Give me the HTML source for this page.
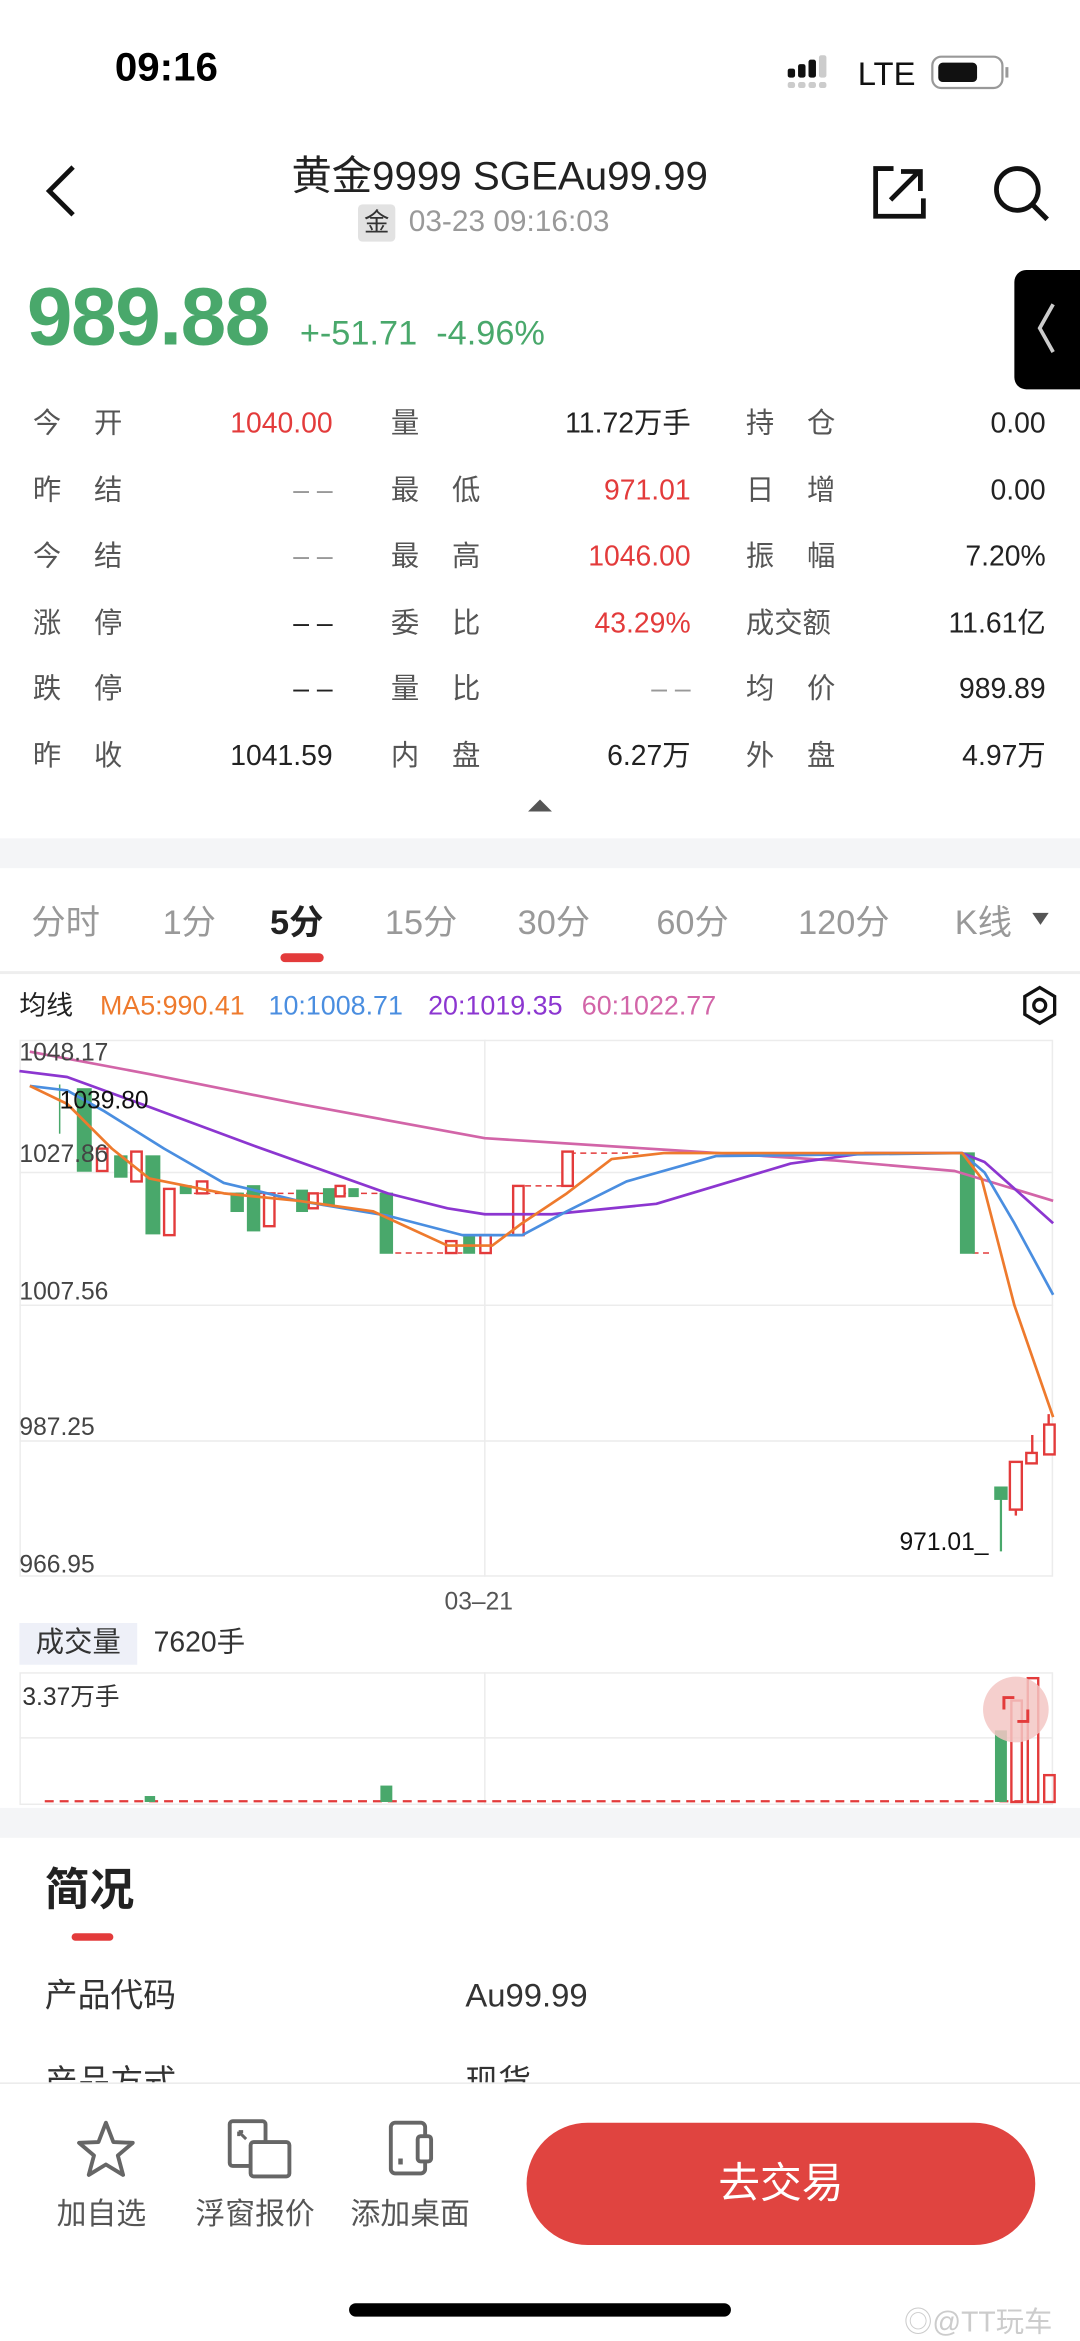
<!DOCTYPE html>
<html><head><meta charset="utf-8"><style>
html,body{margin:0;padding:0;background:#fff;}
body{width:1080px;height:2338px;overflow:hidden;position:relative;}
#w{position:absolute;left:0;top:0;width:724px;height:1568px;transform:scale(1.49171);transform-origin:0 0;font-family:"Liberation Sans","Noto Sans CJK SC",sans-serif;color:#222;}
.a{position:absolute;white-space:nowrap;}
.lb{color:#555;font-size:19px;line-height:24px;}
.v{font-size:19px;color:#222;text-align:right;line-height:24px;}
.r{color:#e33b3b;}
.g{color:#49a86b;}
.tab{position:absolute;top:603px;font-size:23px;color:#999;line-height:30px;}
</style></head><body><div id="w">
<!-- status -->
<div class="a" style="left:77px;top:30px;font-size:27px;font-weight:bold;color:#000;">09:16</div>
<svg class="a" style="left:528px;top:36px" width="150" height="26">
<rect x="0" y="10" width="5" height="6" rx="1.5" fill="#111"/><rect x="7" y="7" width="5" height="9" rx="1.5" fill="#111"/><rect x="14" y="4" width="5" height="12" rx="1.5" fill="#111"/><rect x="21" y="1" width="5" height="15" rx="1.5" fill="#ccc"/>
<rect x="0" y="19" width="5" height="4" rx="1.5" fill="#ccc"/><rect x="7" y="19" width="5" height="4" rx="1.5" fill="#ccc"/><rect x="14" y="19" width="5" height="4" rx="1.5" fill="#ccc"/><rect x="21" y="19" width="5" height="4" rx="1.5" fill="#ccc"/>
<text x="47" y="21" font-size="22" font-family="Liberation Sans" fill="#111">LTE</text>
<rect x="97" y="2" width="47" height="21" rx="6" fill="none" stroke="#999" stroke-width="1.5"/><rect x="101" y="6" width="26" height="13" rx="3" fill="#111"/><rect x="146" y="9" width="2" height="7" fill="#999"/>
</svg>
<!-- header -->
<svg class="a" style="left:28px;top:108px" width="26" height="40"><path d="M21 4 L5 20 L21 36" fill="none" stroke="#111" stroke-width="3.2"/></svg>
<div class="a" style="left:0;width:670px;text-align:center;top:96px;font-size:27px;color:#222;">黄金9999 SGEAu99.99</div>
<div class="a" style="left:240px;top:137px;width:25px;height:25px;background:#e2e2e2;border-radius:3px;font-size:17px;text-align:center;line-height:25px;color:#333;">金</div>
<div class="a" style="left:274px;top:137px;font-size:20px;color:#999;line-height:25px">03-23 09:16:03</div>
<svg class="a" style="left:584px;top:110px" width="38" height="38"><path d="M15 3 H3 V35 H35 V23" fill="none" stroke="#111" stroke-width="3.2"/><path d="M13 24 L31 6 M20 5 H33 V18" fill="none" stroke="#111" stroke-width="3.2"/></svg>
<svg class="a" style="left:664px;top:108px" width="42" height="42"><circle cx="18" cy="19" r="14" fill="none" stroke="#111" stroke-width="3.2"/><path d="M28 29 L38 39" stroke="#111" stroke-width="3.4"/></svg>
<div class="a" style="left:680px;top:181px;width:50px;height:80px;background:#000;border-radius:8px 0 0 8px;"></div>
<svg class="a" style="left:692px;top:200px" width="20" height="40"><path d="M14 4 L5 20 L14 36" fill="none" stroke="#ccc" stroke-width="2.5"/></svg>
<!-- price -->
<div class="a g" style="left:18px;top:180px;font-size:55px;font-weight:bold;letter-spacing:-1px;">989.88</div>
<div class="a g" style="left:201px;top:210px;font-size:23px;">+-51.71 &nbsp;-4.96%</div>
<!-- table -->
<div class="a lb" style="left:22px;top:273px;letter-spacing:22px">今开</div>
<div class="a lb" style="left:22px;top:318px;letter-spacing:22px">昨结</div>
<div class="a lb" style="left:22px;top:362px;letter-spacing:22px">今结</div>
<div class="a lb" style="left:22px;top:407px;letter-spacing:22px">涨停</div>
<div class="a lb" style="left:22px;top:451px;letter-spacing:22px">跌停</div>
<div class="a lb" style="left:22px;top:496px;letter-spacing:22px">昨收</div>
<div class="a v r" style="right:501px;top:273px">1040.00</div>
<div class="a v" style="right:501px;top:318px;color:#999">– –</div>
<div class="a v" style="right:501px;top:362px;color:#999">– –</div>
<div class="a v" style="right:501px;top:407px">– –</div>
<div class="a v" style="right:501px;top:451px">– –</div>
<div class="a v" style="right:501px;top:496px">1041.59</div>
<div class="a lb" style="left:262px;top:273px">量</div>
<div class="a lb" style="left:262px;top:318px;letter-spacing:22px">最低</div>
<div class="a lb" style="left:262px;top:362px;letter-spacing:22px">最高</div>
<div class="a lb" style="left:262px;top:407px;letter-spacing:22px">委比</div>
<div class="a lb" style="left:262px;top:451px;letter-spacing:22px">量比</div>
<div class="a lb" style="left:262px;top:496px;letter-spacing:22px">内盘</div>
<div class="a v" style="right:261px;top:273px">11.72万手</div>
<div class="a v r" style="right:261px;top:318px">971.01</div>
<div class="a v r" style="right:261px;top:362px">1046.00</div>
<div class="a v r" style="right:261px;top:407px">43.29%</div>
<div class="a v" style="right:261px;top:451px;color:#999">– –</div>
<div class="a v" style="right:261px;top:496px">6.27万</div>
<div class="a lb" style="left:500px;top:273px;letter-spacing:22px">持仓</div>
<div class="a lb" style="left:500px;top:318px;letter-spacing:22px">日增</div>
<div class="a lb" style="left:500px;top:362px;letter-spacing:22px">振幅</div>
<div class="a lb" style="left:500px;top:407px">成交额</div>
<div class="a lb" style="left:500px;top:451px;letter-spacing:22px">均价</div>
<div class="a lb" style="left:500px;top:496px;letter-spacing:22px">外盘</div>
<div class="a v" style="right:23px;top:273px">0.00</div>
<div class="a v" style="right:23px;top:318px">0.00</div>
<div class="a v" style="right:23px;top:362px">7.20%</div>
<div class="a v" style="right:23px;top:407px">11.61亿</div>
<div class="a v" style="right:23px;top:451px">989.89</div>
<div class="a v" style="right:23px;top:496px">4.97万</div>
<svg class="a" style="left:353px;top:535px" width="18" height="10"><path d="M1 9 L9 1 L17 9Z" fill="#555"/></svg>
<div class="a" style="left:0;top:562px;width:724px;height:20px;background:#f4f5f7;"></div>
<!-- tabs -->
<div class="tab" style="left:21px">分时</div>
<div class="tab" style="left:109px">1分</div>
<div class="tab" style="left:181px;color:#222;font-weight:bold">5分</div>
<div class="tab" style="left:258px">15分</div>
<div class="tab" style="left:347px">30分</div>
<div class="tab" style="left:440px">60分</div>
<div class="tab" style="left:535px">120分</div>
<div class="tab" style="left:640px">K线</div>
<svg class="a" style="left:692px;top:611px" width="12" height="10"><path d="M0 1 H11 L5.5 9Z" fill="#555"/></svg>
<div class="a" style="left:188px;top:639px;width:29px;height:6px;border-radius:3px;background:#e33b3b;"></div>
<div class="a" style="left:0;top:651px;width:724px;height:2px;background:#eee;"></div>
<!-- legend -->
<div class="a" style="left:13px;top:662px;font-size:18px;color:#222;line-height:24px">均线</div>
<div class="a" style="left:67px;top:662px;font-size:18px;color:#ee7a2d;line-height:24px">MA5:990.41</div>
<div class="a" style="left:180px;top:662px;font-size:18px;color:#4a8ee0;line-height:24px">10:1008.71</div>
<div class="a" style="left:287px;top:662px;font-size:18px;color:#8c36d0;line-height:24px">20:1019.35</div>
<div class="a" style="left:390px;top:662px;font-size:18px;color:#d265a8;line-height:24px">60:1022.77</div>
<svg class="a" style="left:684px;top:660px" width="26" height="28"><path d="M13 2 L23 8 V20 L13 26 L3 20 V8Z" fill="none" stroke="#111" stroke-width="2.2"/><circle cx="13" cy="14" r="4" fill="none" stroke="#111" stroke-width="2.2"/></svg>
<!-- chart -->
<svg class="a" style="left:0;top:0" width="724" height="1240">
<g stroke="#ececec" stroke-width="1" fill="none">
<rect x="13.5" y="697.5" width="692" height="359"/>
<line x1="13" y1="786" x2="706" y2="786"/><line x1="13" y1="875" x2="706" y2="875"/><line x1="13" y1="966" x2="706" y2="966"/>
<line x1="325" y1="697" x2="325" y2="1057"/>
<rect x="13.5" y="1121.5" width="692" height="88"/><line x1="13" y1="1165" x2="706" y2="1165"/><line x1="325" y1="1121" x2="325" y2="1210"/>
</g>
<g stroke="#e33b3b" stroke-dasharray="4 3" stroke-width="1">
<line x1="130" y1="800" x2="262" y2="800"/><line x1="265" y1="840" x2="310" y2="840"/><line x1="345" y1="795" x2="378" y2="795"/><line x1="382" y1="773" x2="430" y2="773"/><line x1="652" y1="840" x2="664" y2="840"/>
</g>
<g fill="#49a86b" stroke="#49a86b">
<rect x="52" y="730" width="9" height="55"/><rect x="77" y="775" width="8" height="14"/><rect x="98" y="775" width="9" height="52"/><rect x="121" y="795" width="7" height="5"/><rect x="155" y="800" width="8" height="12"/><rect x="166" y="795" width="8" height="30"/><rect x="199" y="798" width="7" height="14"/><rect x="217" y="797" width="7" height="11"/><rect x="234" y="797" width="6" height="5"/><rect x="255" y="800" width="8" height="40"/><rect x="311" y="829" width="7" height="11"/><rect x="644" y="773" width="9" height="67"/><rect x="667" y="997" width="8" height="8"/>
<line x1="671" y1="1005" x2="671" y2="1040" stroke-width="1.5"/><line x1="40" y1="727" x2="40" y2="760" stroke-width="1"/>
</g>
<g fill="#fff" stroke="#e33b3b" stroke-width="1.6">
<rect x="65" y="770" width="7" height="15"/><rect x="88" y="772" width="7" height="20"/><rect x="110" y="797" width="7" height="31"/><rect x="132" y="792" width="7" height="8"/><rect x="177" y="800" width="7" height="22"/><rect x="207" y="800" width="6" height="10"/><rect x="225" y="795" width="6" height="7"/><rect x="299" y="832" width="7" height="8"/><rect x="322" y="828" width="7" height="12"/><rect x="344" y="795" width="7" height="33"/><rect x="377" y="772" width="7" height="23"/><rect x="677" y="980" width="8" height="32"/><rect x="688" y="974" width="7" height="7"/><rect x="700" y="955" width="7" height="20"/>
<line x1="681" y1="1012" x2="681" y2="1016"/><line x1="692" y1="962" x2="692" y2="974"/><line x1="703" y1="948" x2="703" y2="955"/>
</g>
<g fill="none" stroke-width="1.8" stroke-linejoin="round">
<polyline stroke="#d265a8" points="20,705 100,720 200,740 325,763 450,771 560,778 640,785 706,805"/>
<polyline stroke="#8c36d0" points="13,718 45,722 100,742 170,768 260,800 300,810 325,814 370,814 440,807 530,780 580,773 645,773 660,779 706,820"/>
<polyline stroke="#4a8ee0" points="20,728 45,731 70,745 110,770 150,793 200,805 260,815 310,828 350,828 380,812 420,792 480,775 645,773 660,786 680,820 706,868"/>
<polyline stroke="#ee7a2d" points="20,728 45,740 75,770 100,790 150,800 200,805 250,812 300,835 330,835 350,820 380,800 410,777 445,773 645,773 658,790 680,875 706,950"/>
</g>
<g font-family="Liberation Sans" font-size="16.5" fill="#444">
<text x="13" y="711">1048.17</text><text x="13" y="779">1027.86</text><text x="13" y="871">1007.56</text><text x="13" y="962">987.25</text><text x="13" y="1054">966.95</text>
<text x="40" y="743" fill="#111">1039.80</text><text x="603" y="1039" fill="#111">971.01_</text>
<text x="298" y="1079" fill="#555">03–21</text>
<text x="15" y="1143" fill="#333" font-family="Liberation Sans, Noto Sans CJK SC">3.37万手</text>
</g>
<line x1="30" y1="1207.5" x2="690" y2="1207.5" stroke="#e33b3b" stroke-dasharray="6 4" stroke-width="1.5"/>
<rect x="255" y="1197" width="8" height="11" fill="#49a86b"/><rect x="97" y="1204" width="7" height="4" fill="#49a86b"/>
<rect x="667" y="1160" width="8" height="48" fill="#49a86b"/>
<g fill="none" stroke="#e33b3b" stroke-width="1.6"><rect x="678" y="1140" width="7" height="68"/><rect x="689" y="1125" width="7" height="83"/><rect x="700" y="1190" width="7" height="18"/></g>
<circle cx="681" cy="1146" r="22" fill="#f3c7c4" opacity="0.85"/>
<path d="M673 1146 V1138 H680 M689 1146 V1154 H682" fill="none" stroke="#e33b3b" stroke-width="2"/>
</svg>
<div class="a" style="left:13px;top:1088px;width:79px;height:28px;background:#eef0f8;font-size:19px;text-align:center;line-height:28px;color:#333">成交量</div>
<div class="a" style="left:103px;top:1090px;font-size:19px;color:#333;line-height:24px">7620手</div>
<div class="a" style="left:0;top:1212px;width:724px;height:20px;background:#f4f5f7;"></div>
<!-- info -->
<div class="a" style="left:30px;top:1249px;font-size:30px;font-weight:bold;color:#222;line-height:38px">简况</div>
<div class="a" style="left:48px;top:1296px;width:28px;height:5px;border-radius:3px;background:#e33b3b;"></div>
<div class="a" style="left:30px;top:1324px;font-size:22px;color:#333;line-height:28px">产品代码</div>
<div class="a" style="left:312px;top:1324px;font-size:22px;color:#333;line-height:28px">Au99.99</div>
<div class="a" style="left:30px;top:1382px;font-size:22px;color:#333;height:14px;overflow:hidden;line-height:28px">产品方式</div>
<div class="a" style="left:312px;top:1382px;font-size:22px;color:#333;height:14px;overflow:hidden;line-height:28px">现货</div>
<!-- bottom bar -->
<div class="a" style="left:0;top:1396px;width:724px;height:172px;background:#fff;border-top:1px solid #eaeaea;"></div>
<svg class="a" style="left:50px;top:1420px" width="42" height="42"><path d="M21 3 L26 16 L39 16.5 L29 25 L32.5 38 L21 31 L9.5 38 L13 25 L3 16.5 L16 16Z" fill="none" stroke="#666" stroke-width="2.6" stroke-linejoin="round"/></svg>
<svg class="a" style="left:152px;top:1420px" width="46" height="42"><rect x="2" y="2" width="24" height="30" rx="2" fill="none" stroke="#666" stroke-width="2.6"/><rect x="16" y="16" width="26" height="23" rx="2" fill="#fff" stroke="#666" stroke-width="2.6"/><path d="M8 9 L13 14 M8 9 V12 M8 9 H11" stroke="#666" stroke-width="2"/></svg>
<svg class="a" style="left:258px;top:1420px" width="42" height="42"><rect x="4" y="3" width="23" height="34" rx="3" fill="none" stroke="#666" stroke-width="2.6"/><rect x="22" y="12" width="9" height="17" rx="2" fill="#fff" stroke="#666" stroke-width="2.6"/><rect x="9" y="27" width="3" height="4" fill="#666"/></svg>
<div class="a" style="left:38px;top:1472px;font-size:20px;color:#555;line-height:26px">加自选</div>
<div class="a" style="left:131px;top:1472px;font-size:20px;color:#555;line-height:26px">浮窗报价</div>
<div class="a" style="left:235px;top:1472px;font-size:20px;color:#555;line-height:26px">添加桌面</div>
<div class="a" style="left:353px;top:1423px;width:341px;height:82px;border-radius:41px;background:#e04440;color:#fff;font-size:28px;text-align:center;line-height:82px;">去交易</div>
<div class="a" style="left:234px;top:1544px;width:256px;height:9px;border-radius:5px;background:#000;"></div>
<div class="a" style="left:606px;top:1542px;font-size:19px;color:#ccc">◎@TT玩车</div>
</div></body></html>
